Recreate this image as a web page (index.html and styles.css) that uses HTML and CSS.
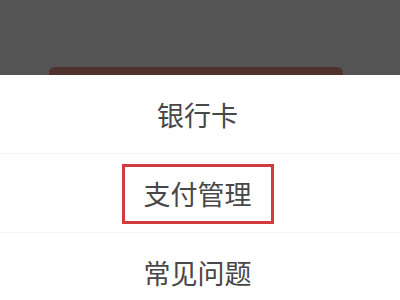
FILE: index.html
```html
<!DOCTYPE html>
<html lang="zh-CN">
<head>
  <meta charset="UTF-8">
  <meta name="viewport" content="width=device-width, initial-scale=1.0">
  <title>支付管理</title>
  <link rel="stylesheet" href="styles.css">
</head>
<body>
  <div class="backdrop">
    <div class="pay-btn"></div>
  </div>

  <ul class="action-sheet">
    <li class="sheet-item">银行卡</li>
    <li class="sheet-item"><span class="highlight">支付管理</span></li>
    <li class="sheet-item">常见问题</li>
  </ul>
</body>
</html>
```

FILE: styles.css
```css
body {
  margin: 0;
  width: 400px;
  height: 300px;
  overflow: hidden;
  background-color: #fff;
  font-family: "Noto Sans CJK SC", "Noto Sans", sans-serif;
}

.backdrop {
  height: 75px;
  background-color: #545454;
  display: flex;
  align-items: flex-end;
  justify-content: center;
}

.pay-btn {
  width: 294px;
  height: 8px;
  margin-left: -8px;
  background-color: #4f312d;
  border-radius: 6px 6px 0 0;
}

.action-sheet {
  list-style: none;
  margin: 0;
  padding: 0;
  background-color: #fff;
}

.sheet-item {
  height: 77px;
  display: flex;
  align-items: center;
  justify-content: center;
  border-bottom: 1px solid #f4f4f4;
  font-size: 27px;
  color: #474747;
  padding: 1px 5px 0 0;
}

.highlight {
  display: inline-block;
  border: 3px solid #d23a3f;
  padding: 0 19px;
  line-height: 54px;
}
```
